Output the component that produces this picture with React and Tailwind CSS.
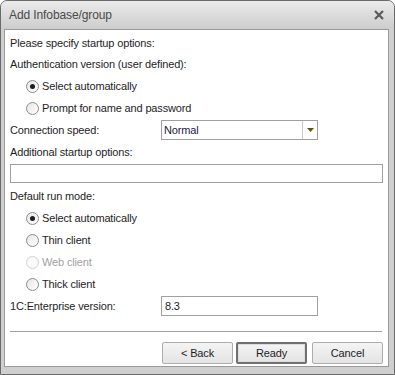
import React from "react";

function Radio({ checked, disabled, label }) {
  return (
    <div className="h-[22px] flex items-center pl-[16px]">
      <span
        className={`w-[13px] h-[13px] rounded-full border flex items-center justify-center ${
          disabled
            ? "border-[#d4d4d4] bg-[#fafafa]"
            : "border-[#8c8c8c] bg-gradient-to-br from-[#e6e6e6] to-[#ffffff]"
        }`}
      >
        {checked && <span className="w-[5px] h-[5px] rounded-full bg-[#1e1e1e]" />}
      </span>
      <span className={`ml-[3px] ${disabled ? "text-[#a2a2a2]" : "text-[#1e1e1e]"}`}>
        {label}
      </span>
    </div>
  );
}

function Button({ label, primary }) {
  return (
    <div
      className={`w-[71px] h-[22px] shrink-0 rounded-[2px] flex items-center justify-center bg-gradient-to-b from-[#f4f4f4] to-[#e4e4e4] text-[#1e1e1e] ${
        primary
          ? "border-2 border-[#707070] shadow-[inset_0_0_0_1px_#dcdcdc]"
          : "border border-[#acacac]"
      }`}
    >
      {label}
    </div>
  );
}

export default function App() {
  return (
    <div
      className="w-[395px] h-[375px] flex flex-col rounded-t-[7px] border border-[#6a6a6a] bg-[#cfcfcf] overflow-hidden"
      style={{ fontFamily: '"Liberation Sans", Arial, sans-serif' }}
    >
      {/* Title bar */}
      <div className="h-[28px] shrink-0 flex items-center justify-between pl-[8px] pr-[9px] bg-gradient-to-b from-[#ebebeb] to-[#cdcdcd]">
        <span className="text-[12px] text-[#4a4a4a] tracking-[-0.1px]">Add Infobase/group</span>
        <svg width="12" height="12" viewBox="0 0 12 12">
          <path d="M2 2 L10 10 M10 2 L2 10" stroke="#5a5a5a" strokeWidth="2.2" />
        </svg>
      </div>

      {/* Client area */}
      <div className="flex-1 ml-[3px] mr-[5px] mb-[7px] border border-[#9a9a9a] bg-white text-[11px] tracking-[-0.15px] text-[#1e1e1e] flex flex-col pt-[2px] px-[5px]">
        <div className="h-[22px] shrink-0 flex items-center">Please specify startup options:</div>
        <div className="h-[21px] shrink-0 flex items-center">Authentication version (user defined):</div>
        <Radio checked label="Select automatically" />
        <Radio label="Prompt for name and password" />

        <div className="h-[22px] shrink-0 flex items-center">
          <span className="w-[151px]">Connection speed:</span>
          <div className="w-[157px] h-[20px] border border-[#a0a0a0] flex items-stretch">
            <span className="flex-1 flex items-center pl-[2px] text-[#1a1a40]">Normal</span>
            <span className="w-[15px] border-l border-[#c8c8c8] flex items-center justify-center">
              <svg width="7" height="4" viewBox="0 0 7 4">
                <path d="M0 0 H7 L3.5 4 Z" fill="#6b5200" />
              </svg>
            </span>
          </div>
        </div>

        <div className="h-[22px] shrink-0 flex items-center">Additional startup options:</div>
        <div className="h-[19px] shrink-0 mt-[1px] border border-[#a0a0a0]" />

        <div className="h-[22px] shrink-0 mt-[2px] flex items-center">Default run mode:</div>
        <Radio checked label="Select automatically" />
        <Radio label="Thin client" />
        <Radio disabled label="Web client" />
        <Radio label="Thick client" />

        <div className="h-[22px] shrink-0 flex items-center">
          <span className="w-[151px]">1C:Enterprise version:</span>
          <div className="w-[157px] h-[20px] border border-[#a0a0a0] flex items-center pl-[3px]">
            8.3
          </div>
        </div>

        <div className="mt-[14px] h-px shrink-0 bg-[#a0a0a0] mr-[1px]" />

        <div className="mt-[10px] flex justify-end">
          <Button label="< Back" />
          <div className="w-[3px]" />
          <Button label="Ready" primary />
          <div className="w-[5px]" />
          <Button label="Cancel" />
        </div>
      </div>
    </div>
  );
}
